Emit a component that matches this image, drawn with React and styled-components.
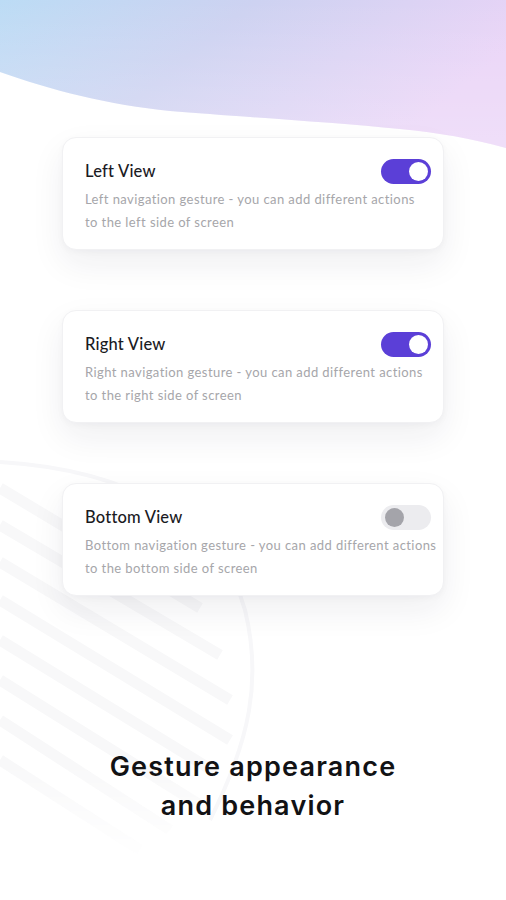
import React from "react";
import styled, { createGlobalStyle } from "styled-components";

const Global = createGlobalStyle`
  html, body { margin: 0; padding: 0; background: #ffffff; }
  body { font-family: "Lato", "Noto Sans", sans-serif; -webkit-font-smoothing: antialiased; }
`;

const Screen = styled.div`
  position: relative;
  width: 506px;
  height: 900px;
  overflow: hidden;
  background: #ffffff;
`;

const Decor = styled.svg`
  position: absolute;
  left: 0;
  top: 0;
  width: 506px;
  height: 900px;
  pointer-events: none;
`;

const Content = styled.div`
  position: relative;
  display: flex;
  flex-direction: column;
  align-items: center;
  padding-top: 137px;
`;

const CardList = styled.div`
  display: flex;
  flex-direction: column;
  gap: 60px;
`;

const Card = styled.div`
  width: 382px;
  box-sizing: border-box;
  height: 113px;
  padding: 21px 12px 0 22px;
  background: #ffffff;
  border-radius: 14px;
  border: 1px solid #f1f1f3;
  box-shadow: 0 14px 34px rgba(30, 30, 50, 0.07), 0 2px 6px rgba(30, 30, 50, 0.03);
`;

const CardHead = styled.div`
  display: flex;
  align-items: center;
  justify-content: space-between;
  height: 24px;
`;

const Title = styled.div`
  font-size: 16.5px;
  font-weight: 500;
  color: #1b1b1f;
  letter-spacing: 0.2px;
`;

const Desc = styled.div`
  margin-top: 5px;
  font-size: 13px;
  line-height: 23px;
  color: #a6a6aa;
  letter-spacing: 0.42px;
  white-space: nowrap;
`;

const Toggle = styled.div`
  width: 50px;
  height: 25px;
  border-radius: 13px;
  box-sizing: border-box;
  background: ${(p) => (p.$on ? "#5b3fd7" : "#ececef")};
  display: flex;
  align-items: center;
  justify-content: ${(p) => (p.$on ? "flex-end" : "flex-start")};
  padding: 0 3px 0 4px;
`;

const Knob = styled.div`
  width: 19px;
  height: 19px;
  border-radius: 50%;
  background: ${(p) => (p.$on ? "#ffffff" : "#a4a4aa")};
`;

const Heading = styled.h1`
  margin: 151px 0 0;
  font-family: "Inter", "Lato", sans-serif;
  font-size: 27px;
  line-height: 39px;
  font-weight: 600;
  color: #121214;
  text-align: center;
  letter-spacing: 1.2px;
`;

const items = [
  {
    title: "Left View",
    desc: ["Left navigation gesture - you can add different actions", "to the left side of screen"],
    on: true,
  },
  {
    title: "Right View",
    desc: ["Right navigation gesture - you can add different actions", "to the right side of screen"],
    on: true,
  },
  {
    title: "Bottom View",
    desc: ["Bottom navigation gesture - you can add different actions", "to the bottom side of screen"],
    on: false,
  },
];

export default function App() {
  return (
    <Screen>
      <Global />
      <Decor viewBox="0 0 506 900">
        <defs>
          <linearGradient id="blob" x1="0" y1="0" x2="1" y2="0.35">
            <stop offset="0" stopColor="#bcdcf5" />
            <stop offset="0.45" stopColor="#cdd2f1" />
            <stop offset="1" stopColor="#ead4f7" />
          </linearGradient>
          <linearGradient id="fade" x1="0" y1="0" x2="0" y2="1">
            <stop offset="0" stopColor="#ffffff" stopOpacity="0" />
            <stop offset="1" stopColor="#ffffff" stopOpacity="0.25" />
          </linearGradient>
          <linearGradient id="stripeFade" x1="0" y1="0" x2="0" y2="1">
            <stop offset="0" stopColor="#ffffff" stopOpacity="1" />
            <stop offset="0.75" stopColor="#ffffff" stopOpacity="1" />
            <stop offset="1" stopColor="#ffffff" stopOpacity="0" />
          </linearGradient>
          <mask id="dnaMask">
            <path d="M0 470 C120 480 210 520 240 600 C260 660 250 720 200 800 L140 860 L0 860 Z" fill="url(#stripeFade)" />
          </mask>
        </defs>
        <path
          d="M0 0 H506 V148 C470 138 440 133 400 129 C330 122 230 116 170 111 C110 105 50 90 0 72 Z"
          fill="url(#blob)"
        />
        <path
          d="M0 0 H506 V148 C470 138 440 133 400 129 C330 122 230 116 170 111 C110 105 50 90 0 72 Z"
          fill="url(#fade)"
        />
        <g mask="url(#dnaMask)" stroke="#f8f8f9" strokeWidth="11" fill="none">
          <path d="M0 488 L200 608" />
          <path d="M0 525 L220 655" />
          <path d="M0 562 L230 700" />
          <path d="M0 600 L230 740" />
          <path d="M0 640 L220 775" />
          <path d="M0 680 L200 805" />
          <path d="M0 720 L170 830" />
          <path d="M0 760 L140 850" />
        </g>
        <path
          d="M0 462 C130 470 220 520 245 610 C262 680 250 740 210 820"
          stroke="#f7f7f9"
          strokeWidth="4"
          fill="none"
        />
      </Decor>
      <Content>
        <CardList>
          {items.map((it) => (
            <Card key={it.title}>
              <CardHead>
                <Title>{it.title}</Title>
                <Toggle $on={it.on}>
                  <Knob $on={it.on} />
                </Toggle>
              </CardHead>
              <Desc>
                {it.desc[0]}
                <br />
                {it.desc[1]}
              </Desc>
            </Card>
          ))}
        </CardList>
        <Heading>
          Gesture appearance
          <br />
          and behavior
        </Heading>
      </Content>
    </Screen>
  );
}
